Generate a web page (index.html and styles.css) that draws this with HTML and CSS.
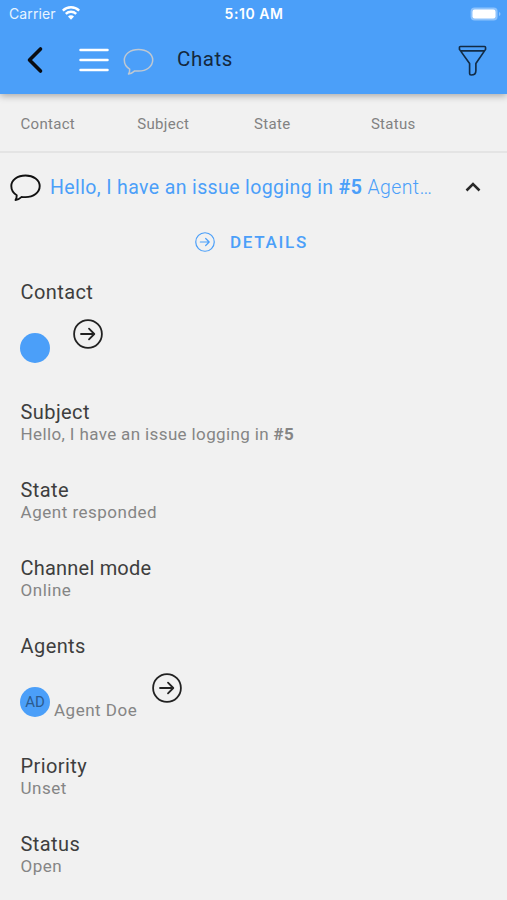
FILE: index.html
```html
<!DOCTYPE html>
<html lang="en">
<head>
<meta charset="utf-8">
<title>Chats</title>
<link rel="stylesheet" href="styles.css">
</head>
<body>
<svg class="defs" width="0" height="0">
  <symbol id="arrow" viewBox="0 0 30 30"><circle cx="15" cy="15" r="13.9"/><path d="M8 15h13M16 9.7l5.300 5.300-5.300 5.300"/></symbol>
  <symbol id="bubble" viewBox="0 0 32 28"><path d="M16.500 1.500C8.500 1.500 2.300 6 2.300 12.100c0 4 2.200 7.200 5.400 9.100 .1 1.900-.3 3.400-1.200 4.800 2.600-.4 4.500-1.500 6.200-3.100 1.200.3 2.300.2 3.800.2 8 0 14.200-4.600 14.200-11S24.500 1.500 16.500 1.500z"/></symbol>
</svg>
<header class="header">
  <div class="statusbar">
    <div class="carrier"><span class="carrier-name">Carrier</span>
      <svg class="wifi" viewBox="0 0 18 14"><path d="M.8 4.600a11.800 11.800 0 0 1 16.400 0M3.800 7.900a7.500 7.500 0 0 1 10.400 0"/><path class="solid" d="M9 13.700l-3-3.100a4.200 4.200 0 0 1 6 0z"/></svg>
    </div>
    <div class="time">5:10 AM</div>
    <svg class="battery" viewBox="0 0 31 14"><rect class="case" x=".6" y=".6" width="27" height="12.800" rx="4"/><rect class="charge" x="2.500" y="2.500" width="23" height="9" rx="2.200"/><path class="case" d="M29 5v4q1.500-.6 1.500-2T29 5z"/></svg>
  </div>
  <div class="toolbar">
    <svg class="back" viewBox="0 0 18 28"><path d="M14.500 3L3.500 14l11 11"/></svg>
    <svg class="menu" viewBox="0 0 30 26"><path d="M1.500 3h27M1.500 13h27M1.500 23h27"/></svg>
    <svg class="bubble pale"><use href="#bubble"/></svg>
    <h1 class="title">Chats</h1>
    <svg class="filter" viewBox="0 0 30 32"><path d="M1.500 2.500q0-1 1-1h25q1 0 1 1v2l-10 14.600v7.400q0 4.500-5 4.500-1.500 0-1.500-1.500V19.100L1.500 4.500zM2.500 6h25"/></svg>
  </div>
</header>
<nav class="columns"><span>Contact</span><span>Subject</span><span>State</span><span>Status</span></nav>
<main>
  <div class="chat">
    <svg class="bubble"><use href="#bubble"/></svg>
    <div class="chat-title">Hello, I have an issue logging in <b>#5</b> <span class="agent">Agent…</span></div>
    <svg class="caret" viewBox="0 0 16 12"><path d="M1.500 9.500L8 3l6.500 6.500"/></svg>
  </div>
  <div class="details"><svg class="arrow small"><use href="#arrow"/></svg><span class="details-text">DETAILS</span></div>
  <section class="field tall"><h2>Contact</h2><div class="person"><span class="avatar"></span><svg class="arrow contact-arrow"><use href="#arrow"/></svg></div></section>
  <section class="field"><h2>Subject</h2><p class="subject">Hello, I have an issue logging in <b>#5</b></p></section>
  <section class="field"><h2>State</h2><p>Agent responded</p></section>
  <section class="field"><h2 class="channel">Channel mode</h2><p>Online</p></section>
  <section class="field tall"><h2>Agents</h2><div class="person"><span class="avatar">AD</span><span class="name">Agent Doe</span><svg class="arrow agent-arrow"><use href="#arrow"/></svg></div></section>
  <section class="field"><h2>Priority</h2><p>Unset</p></section>
  <section class="field"><h2>Status</h2><p>Open</p></section>
</main>
</body>
</html>
```
FILE: styles.css
```css
* { box-sizing: border-box; }
body { margin: 0; height: 900px; overflow: hidden; background: #f1f1f1; font-family: Roboto, sans-serif; color: #3e3e3e; }
svg { display: block; flex: none; fill: none; stroke: currentColor; stroke-linecap: round; stroke-linejoin: round; }
.defs { position: absolute; }
h1, h2, p { margin: 0; font-weight: 400; }
.header { height: 94px; background: #4b9ff9; box-shadow: 0 2px 7px rgba(0,0,0,.3); }
.statusbar { height: 27px; display: grid; grid-template-columns: 1fr auto 1fr; align-items: center; padding: 0 6px 0 9px; color: #fff; }
.carrier { display: flex; align-items: center; gap: 6px; font: 14px/27px Inter, sans-serif; letter-spacing: .12px; color: #e8f4ff; }
.wifi { width: 18px; height: 14px; stroke-width: 2.4; color: #fff; stroke-linecap: butt; margin-bottom: 1px; }
.wifi .solid { fill: #fff; stroke: none; }
.time { font: 600 14px/27px Inter, sans-serif; letter-spacing: .55px; margin-right: 2px; }
.battery { width: 31px; height: 14px; justify-self: end; stroke: none; }
.case { fill: #8ec3fc; }
.charge { fill: #fff; }
.toolbar { height: 66px; display: flex; align-items: center; padding: 0 20px 0 26px; }
.back { width: 18px; height: 28px; color: #0a0d12; stroke-width: 3.6; margin-bottom: 1px; }
.menu { width: 30px; height: 26px; margin-left: 35px; color: #fff; stroke-width: 2.5; }
.bubble { width: 32px; height: 28px; stroke-width: 1.9; color: #111; }
.pale { margin: 3px 0 0 13px; color: #bfc8d2; stroke-width: 1.5; }
.title { margin: 0 0 2px 23px; font-size: 20.500px; line-height: 24px; letter-spacing: .55px; color: #14283e; }
.filter { width: 29px; height: 31px; margin-left: auto; color: #122b45; stroke-width: 1.7; }
.columns { height: 59px; border-bottom: 2px solid #e4e4e4; padding: 2px 0 0 20.500px; display: grid; grid-template-columns: repeat(4, 116.8px); align-items: center; font-size: 15px; letter-spacing: .3px; color: #828282; }
.chat { height: 69px; display: flex; align-items: center; padding: 0 26px 0 9px; }
.chat-title { margin-left: 9px; flex: 1; white-space: nowrap; font-size: 19.500px; line-height: 24px; letter-spacing: .38px; color: #4b9ff9; }
.agent { font-weight: 300; }
.caret { width: 16px; height: 12px; margin-bottom: 2px; stroke-width: 2.5; color: #292929; stroke-linecap: butt; stroke-linejoin: miter; }
.details { height: 59px; padding: 10px 0 0 195px; display: flex; align-items: flex-start; color: #4b9ff9; font-size: 17px; font-weight: 500; line-height: 20px; letter-spacing: 1.7px; }
.details-text { margin-left: 15px; }
.arrow { width: 30px; height: 30px; stroke-width: 1.8; color: #222; }
.arrow.small { width: 20px; height: 20px; color: #4b9ff9; }
.field { height: 78px; padding-left: 20px; }
.field.tall { height: 120px; }
h2 { font-size: 20px; line-height: 23px; letter-spacing: .4px; text-indent: .6px; }
.channel { letter-spacing: .2px; }
p, .name { font-size: 17px; line-height: 20px; letter-spacing: .5px; color: #858585; }
p { text-indent: .6px; }
.subject { letter-spacing: .37px; }
.person { display: flex; align-items: flex-start; padding-top: 15px; }
.avatar { width: 30px; height: 30px; margin-top: 14px; border-radius: 50%; background: #4b9ff9; font-size: 15px; line-height: 30px; text-align: center; color: #2b5b8f; }
.name { margin: 27px 0 0 4px; }
.contact-arrow { margin-left: 22.500px; }
.agent-arrow { margin-left: 15px; }
```
